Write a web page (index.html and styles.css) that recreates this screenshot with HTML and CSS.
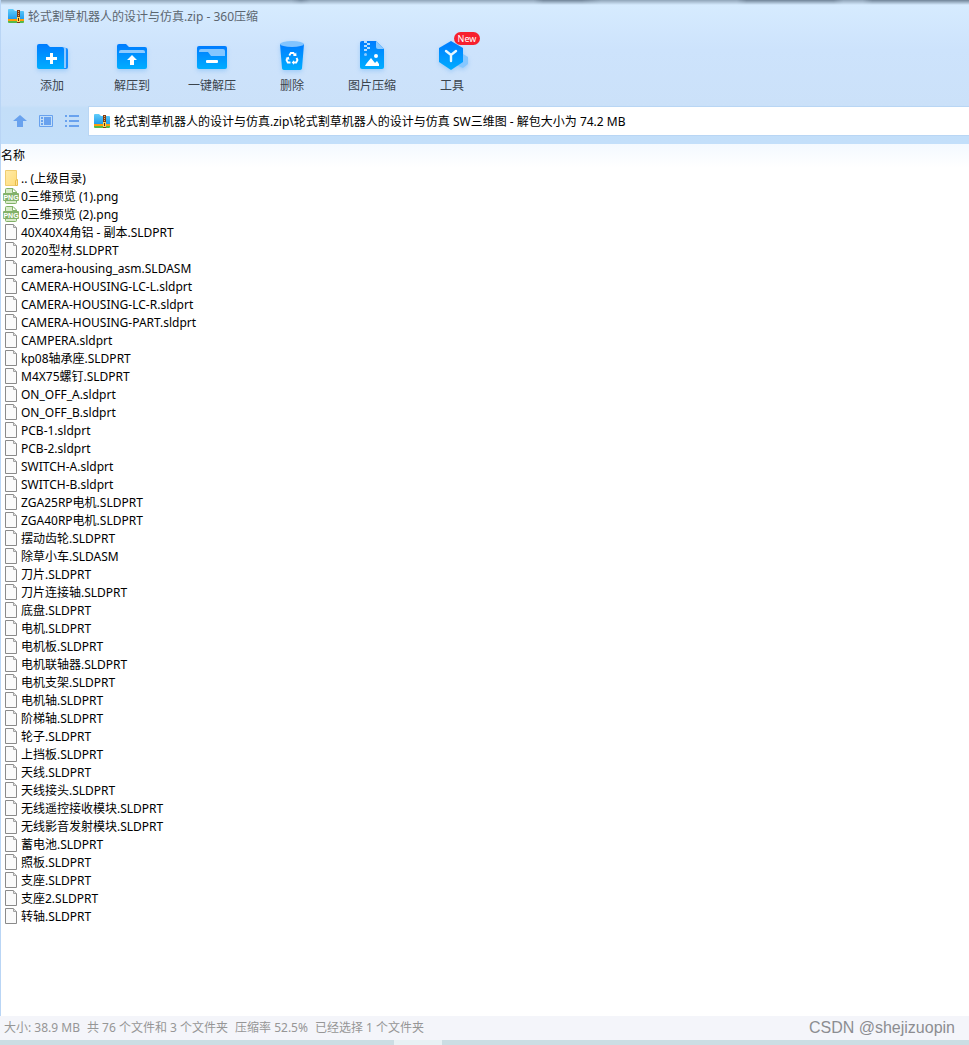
FILE: index.html
```html
<!DOCTYPE html>
<html lang="zh-CN">
<head>
<meta charset="utf-8">
<title>轮式割草机器人的设计与仿真.zip - 360压缩</title>
<link rel="stylesheet" href="styles.css">
</head>
<body>
<svg class="defs" aria-hidden="true">
  <defs>
    <linearGradient id="blue" x1="0" y1="0" x2="0" y2="1"><stop offset="0" stop-color="#007cff"/><stop offset="1" stop-color="#00adff"/></linearGradient>
    <linearGradient id="sky" x1="0" y1="0" x2="0" y2="1"><stop offset="0" stop-color="#62cdfa"/><stop offset="1" stop-color="#209cec"/></linearGradient>
    <linearGradient id="gold" x1="0" y1="0" x2="1" y2="1"><stop offset="0" stop-color="#ffebaa"/><stop offset="1" stop-color="#ffdc78"/></linearGradient>
    <symbol id="archive" viewBox="0 0 16 14">
      <path d="M0 1Q0 0 1 0H5L7 2H15Q16 2 16 3V10H0Z" fill="url(#sky)"/>
      <path d="M0 12H16V13Q16 14 15 14H1Q0 14 0 13Z" fill="#55b948"/>
      <path d="M0 10H16V12H0Z" fill="#ff9d0a"/>
      <path d="M9 1H12V14H9Z" fill="#803c12"/>
      <path d="M10 2H11V3H10ZM10 4H11V5H10ZM10 6H11V7H10Z" fill="#e4b16c"/>
      <path d="M9 8H12V13H9Z" fill="#ffd35a"/><path d="M10 9H11V12H10Z" fill="#5b2909"/>
    </symbol>
    <symbol id="page" viewBox="0 0 14 16">
      <path d="M1.500 .5H9.500L12.500 3.500V15.500H1.500Z" fill="#fafafa" stroke="#8a8a8a"/>
      <path d="M9.500 .5V3.500H12.500" fill="#ddd" stroke="#a2a2a2"/>
    </symbol>
    <symbol id="png" viewBox="0 0 16 16">
      <path d="M2.500 6V1.500Q2.500 .5 3.500 .5H10L13.500 4V6M2.500 12V14.500Q2.500 15.500 3.500 15.500H12.500Q13.500 15.500 13.500 14.500V12" fill="#d8ebc9" stroke="#82b168"/>
      <path d="M9.500 1V4.500H13" fill="#fff" stroke="#82b168"/>
      <rect y="5" width="16" height="8" rx="1" fill="#83b26a"/>
      <text class="png-text" x="8" y="12" text-anchor="middle">PNG</text>
    </symbol>
  </defs>
</svg>
<div class="window">
  <header class="chrome">
    <div class="backdrop" aria-hidden="true"></div>
    <h1 class="title"><svg class="archive-icon"><use href="#archive"/></svg><span>轮式割草机器人的设计与仿真.zip - 360压缩</span></h1>
    <nav class="toolbar" aria-label="工具栏">
      <button class="tool" type="button">
        <svg viewBox="-1 0 34 34"><path d="M27 6h3q2 0 2 2v17q0 2-2 2H8z" fill="#168cff"/><path d="M20 5h8q2 0 2 2v19H20z" fill="#90c9ff"/><path d="M1 4q0-2 2-2h8l3 3h12q2 0 2 2v20H3q-2 0-2-2z" fill="url(#blue)"/><path d="M14 11h3v4h4v3h-4v4h-3v-4h-4v-3h4z" fill="#fff"/></svg>
        <span>添加</span>
      </button>
      <button class="tool" type="button">
        <svg viewBox="-1 0 34 34"><path d="M1 4q0-2 2-2h7l3 3h16q2 0 2 2v18q0 2-2 2H3q-2 0-2-2z" fill="url(#blue)"/><path d="M3 11V10q0-2 2-2h22q2 0 2 2v1z" fill="#8dcaff"/><path d="M16 13l5 5h-3v5h-4v-5h-3z" fill="#fff"/></svg>
        <span>解压到</span>
      </button>
      <button class="tool" type="button">
        <svg viewBox="-1 0 34 34"><rect x="1" y="4" width="30" height="23" rx="2" fill="url(#blue)"/><path d="M3 10V9q0-2 2-2h22q2 0 2 2v5H15l-3-4z" fill="#83c6ff"/><rect x="10" y="18" width="12" height="3" rx="1" fill="#fff"/></svg>
        <span>一键解压</span>
      </button>
      <button class="tool" type="button">
        <svg viewBox="-1 0 34 34"><path d="M4 2h24l-2 24q0 2-3 2H9q-3 0-3-2z" fill="url(#blue)"/><ellipse cx="16" cy="2" rx="12" ry="3" fill="#82c4ff"/><path d="M13.300 13.500l1.500-2.500h2.600l1.300 2M20.500 16l1 2-1.300 2.500h-2.700M14.500 20.500h-2.700L10.500 18l1.200-2" fill="none" stroke="#fff" stroke-width="1.800"/><path d="M17 14h3.500l-.3-3.500zM18 18.300v4.400l-2.300-2.200zM9.500 16l3.300-1.300.6 3.300z" fill="#fff"/></svg>
        <span>删除</span>
      </button>
      <button class="tool" type="button">
        <svg viewBox="-1 0 34 34"><path d="M4 1q0-2 2-2h14l8 8v18q0 2-2 2H6q-2 0-2-2z" fill="url(#blue)"/><path d="M20-1l8 8h-6q-2 0-2-2z" fill="#8bc9ff"/><path d="M8-1h3v2H8zM11 1h3v2h-3zM8 3h3v2H8zM11 5h3v2h-3zM8 7h3v2H8z" fill="#b5dcff"/><circle cx="9.500" cy="12.500" r="1.500" fill="#8bcaff"/><circle cx="20" cy="14" r="2" fill="#fff"/><path d="M9 24q0-1 6-8l4 5 2-2 2 3v2z" fill="#fff"/></svg>
        <span>图片压缩</span>
      </button>
      <button class="tool" type="button">
        <svg viewBox="-1 0 34 34"><path d="M27 12l5 3v7l-5 4-7-3z" fill="#86c7ff"/><path d="M15-1l12 7v14l-12 8-12-8V6z" fill="url(#blue)"/><path d="M10 9l5 4 5-4M15 13v6" fill="none" stroke="#e6f7ff" stroke-width="2.400" stroke-linecap="round"/></svg>
        <span>工具</span><b class="badge">New</b>
      </button>
    </nav>
    <div class="location">
      <div class="nav-buttons">
        <button class="nav-button" type="button" aria-label="上级目录"><svg viewBox="0 0 16 16"><path d="M8 2l7 6h-4v6H5V8H1z" fill="#69a2ee"/></svg></button>
        <button class="nav-button" type="button" aria-label="预览视图"><svg viewBox="0 0 16 16"><path d="M1.500 2.500h13v11h-13z" fill="none" stroke="#69a2ee"/><path d="M3 4h2v2H3zM3 7h2v2H3zM3 10h2v2H3zM6 4h7v8H6z" fill="#69a2ee"/></svg></button>
        <button class="nav-button" type="button" aria-label="列表视图"><svg viewBox="0 0 16 16"><path d="M1 2h2v2H1zM5 2h10v2H5zM1 7h2v2H1zM5 7h10v2H5zM1 12h2v2H1zM5 12h10v2H5z" fill="#69a2ee"/></svg></button>
      </div>
      <div class="address">
        <svg class="archive-icon" aria-hidden="true"><use href="#archive"/></svg>
        <input type="text" aria-label="地址" value="轮式割草机器人的设计与仿真.zip\轮式割草机器人的设计与仿真 SW三维图 - 解包大小为 74.2 MB">
      </div>
    </div>
  </header>
  <main class="files">
    <table>
      <thead><tr><th scope="col">名称</th></tr></thead>
      <tbody id="file-list"></tbody>
    </table>
  </main>
  <footer class="status">
    <div class="summary"><span>大小: 38.9 MB</span><span>共 76 个文件和 3 个文件夹</span><span>压缩率 52.5%</span><span>已经选择 1 个文件夹</span></div>
    <span class="watermark">CSDN @shejizuopin</span>
  </footer>
  <div class="desktop" aria-hidden="true"></div>
</div>
<script src="files.js"></script>
</body>
</html>
```

FILE: styles.css
```css
* { box-sizing: border-box; }
body {
  margin: 0;
  background: #fff;
  color: #000;
  font: 12px/18px "Noto Sans", "Noto Sans CJK SC", sans-serif;
}
button, input { font: inherit; color: inherit; border: 0; padding: 0; background: none; }
svg { display: block; overflow: visible; flex: none; }
.defs { position: absolute; width: 0; height: 0; }
.png-text { font: bold 7px "Liberation Sans", sans-serif; fill: #fff; }
.window { display: flex; flex-direction: column; min-height: 100vh; }
.chrome {
  position: relative;
  padding-bottom: 8px;
  border-left: 1px solid #b9d5f5;
  background: linear-gradient(#d7ecff, #cde3fc 50px, #cbe1f9 105px, #c3def8 108px, #c3dffa);
}
.backdrop {
  position: absolute;
  inset: 0 0 auto;
  height: 5px;
  background: linear-gradient(90deg, #8fa4b8 30%, #71869b 31%, #8fa4b8 32%, #8fa4b8 55%, #6f8397 56%, #6f8397 60%, #8fa4b8 62%, #8fa4b8 76%, #6f8397 77%, #6f8397 86%, #8fa4b8 87%, #8fa4b8 89%, #6f8397 90%);
  mask-image: linear-gradient(#000, transparent);
}
.title {
  display: flex;
  align-items: center;
  gap: 4px;
  height: 32px;
  margin: 0;
  padding-left: 7px;
  color: #5c6670;
  font-size: 12px;
  font-weight: 400;
}
.title span, .file span { padding-top: 2px; }
.archive-icon { width: 16px; height: 14px; }
.toolbar { display: flex; padding-left: 11px; }
.tool {
  position: relative;
  display: flex;
  flex-direction: column;
  align-items: center;
  gap: 1px;
  width: 80px;
  height: 74px;
  padding-top: 10px;
  color: #3b444d;
  white-space: nowrap;
}
.tool svg { width: 34px; height: 34px; filter: drop-shadow(0 2px 2px #2994f444); }
.badge {
  position: absolute;
  top: 0;
  left: 42px;
  width: 26px;
  height: 13px;
  border-radius: 7px;
  background: #f7202e;
  color: #fff;
  font-size: 9px;
  font-weight: 400;
  line-height: 13px;
}
.location { display: flex; align-items: center; gap: 8px; padding-left: 11px; }
.nav-buttons { display: flex; gap: 10px; }
.nav-button svg { width: 16px; height: 16px; }
.address {
  flex: 1;
  display: flex;
  align-items: center;
  gap: 4px;
  height: 30px;
  padding-left: 5px;
  border: 1px solid #b9d6f4;
  border-right: 0;
  background: #fff;
}
.address input { flex: 1; min-width: 0; padding-top: 2px; outline: 0; }
.files {
  flex: 1;
  border-left: 1px solid #b9d5f5;
  background: linear-gradient(#f3f9ff, #fff 24px);
}
table { width: 100%; border-collapse: collapse; }
th { height: 25px; padding: 0 0 2px; font-weight: 400; text-align: left; vertical-align: middle; }
td { padding: 0; }
.file { display: flex; align-items: center; gap: 2px; height: 18px; padding-left: 2px; white-space: nowrap; }
.file svg { width: 16px; height: 16px; }
.status {
  display: flex;
  align-items: center;
  justify-content: space-between;
  height: 24px;
  padding: 0 14px 0 4px;
  background: #f4f5fa;
  color: #969696;
}
.summary { display: flex; gap: 7px; }
.watermark { color: #8c8d91; font: 16px/20px "Liberation Sans", sans-serif; }
.desktop { height: 5px; background: linear-gradient(90deg, #cbdde3 394px, #e8f1f4 394px, #e8f1f4 442px, #cbdde3 442px); }
```

FILE: files.js
```js
const names = [
  ".. (上级目录)", "0三维预览 (1).png", "0三维预览 (2).png",
  "40X40X4角铝 - 副本.SLDPRT", "2020型材.SLDPRT", "camera-housing_asm.SLDASM",
  "CAMERA-HOUSING-LC-L.sldprt", "CAMERA-HOUSING-LC-R.sldprt", "CAMERA-HOUSING-PART.sldprt",
  "CAMPERA.sldprt", "kp08轴承座.SLDPRT", "M4X75螺钉.SLDPRT", "ON_OFF_A.sldprt",
  "ON_OFF_B.sldprt", "PCB-1.sldprt", "PCB-2.sldprt", "SWITCH-A.sldprt", "SWITCH-B.sldprt",
  "ZGA25RP电机.SLDPRT", "ZGA40RP电机.SLDPRT", "摆动齿轮.SLDPRT", "除草小车.SLDASM",
  "刀片.SLDPRT", "刀片连接轴.SLDPRT", "底盘.SLDPRT", "电机.SLDPRT", "电机板.SLDPRT",
  "电机联轴器.SLDPRT", "电机支架.SLDPRT", "电机轴.SLDPRT", "阶梯轴.SLDPRT", "轮子.SLDPRT",
  "上挡板.SLDPRT", "天线.SLDPRT", "天线接头.SLDPRT", "无线遥控接收模块.SLDPRT",
  "无线影音发射模块.SLDPRT", "蓄电池.SLDPRT", "照板.SLDPRT", "支座.SLDPRT", "支座2.SLDPRT", "转轴.SLDPRT"
];
const folder = '<svg viewBox="0 0 16 16" aria-hidden="true"><path d="M2.500 .5H13.500V15.500H2.500Z" fill="url(#gold)" stroke="#efcc70"/><path d="M12.500 15.500V10.500L14.500 9.500V15.500Z" fill="#ffe49a" stroke="#e9bc4b"/></svg>';
const list = document.getElementById("file-list");
for (const name of names) {
  const cell = list.insertRow().insertCell();
  const row = document.createElement("div");
  row.className = "file";
  const kind = name.endsWith(".png") ? "png" : "page";
  row.innerHTML = name.startsWith("..") ? folder : `<svg aria-hidden="true"><use href="#${kind}"/></svg>`;
  const label = document.createElement("span");
  label.textContent = name;
  row.append(label);
  cell.append(row);
}
```
